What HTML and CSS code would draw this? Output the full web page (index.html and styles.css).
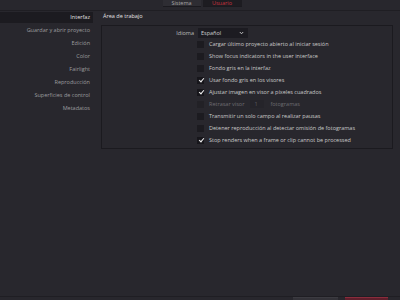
FILE: index.html
```html
<!DOCTYPE html>
<html lang="es">
  <head>
    <meta charset="UTF-8" />
    <title>Preferencias</title>
    <link rel="stylesheet" href="styles.css">
  </head>
  <body>
    <div class="ventana">
      <header class="tabs">
        <div class="tab">Sistema</div>
        <div class="tab activa">Usuario</div>
      </header>
      <div class="cuerpo">
        <ul class="menu">
          <li class="sel">Interfaz</li>
          <li>Guardar y abrir proyecto</li>
          <li>Edición</li>
          <li>Color</li>
          <li>Fairlight</li>
          <li>Reproducción</li>
          <li>Superficies de control</li>
          <li>Metadatos</li>
        </ul>
        <section class="contenido">
          <h2 class="titulo">Área de trabajo</h2>
          <div class="panel">
            <div class="fila fila-idioma">
              <span class="etiqueta">Idioma</span>
              <div class="combo">
                <span>Español</span>
                <svg width="5" height="4" viewBox="0 0 5 4"><path d="M0.8 1 L2.5 2.8 L4.2 1" fill="none" stroke="#cfcfcf" stroke-width="0.9"/></svg>
              </div>
            </div>
            <div class="fila"><span class="caja"></span>Cargar último proyecto abierto al iniciar sesión</div>
            <div class="fila"><span class="caja"></span>Show focus indicators in the user interface</div>
            <div class="fila"><span class="caja"></span>Fondo gris en la interfaz</div>
            <div class="fila"><span class="caja on"></span>Usar fondo gris en los visores</div>
            <div class="fila"><span class="caja on"></span>Ajustar imagen en visor a píxeles cuadrados</div>
            <div class="fila off"><span class="caja"></span>Retrasar visor <span class="num">1</span> fotogramas</div>
            <div class="fila"><span class="caja"></span>Transmitir un solo campo al realizar pausas</div>
            <div class="fila"><span class="caja"></span>Detener reproducción al detectar omisión de fotogramas</div>
            <div class="fila"><span class="caja on"></span>Stop renders when a frame or clip cannot be processed</div>
          </div>
        </section>
      </div>
      <footer class="pie">
        <div class="boton"></div>
        <div class="boton rojo"></div>
      </footer>
    </div>
  </body>
</html>
```

FILE: styles.css
```css
* {
  box-sizing: border-box;
}
body {
  margin: 0;
  background-color: #28272d;
  font-family: "Open Sans", "Liberation Sans", sans-serif;
  font-size: 5.5px;
  color: #c9c9c9;
}
ul {
  list-style: none;
  margin: 0;
  padding: 0;
}
.ventana {
  width: 400px;
  height: 300px;
  display: flex;
  flex-direction: column;
  overflow: hidden;
}
.tabs {
  height: 11px;
  display: flex;
  justify-content: center;
  gap: 2px;
  padding-left: 4px;
  border-bottom: 1px solid #1f1e23;
}
.tab {
  width: 38px;
  height: 7px;
  line-height: 6px;
  text-align: center;
  color: #a8a8a8;
  background-color: #2e2d33;
  border-bottom: 1px solid #1b1a1f;
}
.tab.activa {
  width: 39px;
  background-color: #1d1c21;
  color: #c8323f;
}
.cuerpo {
  flex: 1;
  display: flex;
}
.menu {
  width: 101px;
  padding-top: 1px;
}
.menu li {
  width: 93px;
  height: 13px;
  line-height: 11px;
  text-align: right;
  padding-right: 3px;
  color: #9c9c9f;
}
.menu li.sel {
  height: 11px;
  margin-bottom: 2px;
  background-color: #1c1b20;
  color: #e4e4e4;
}
.contenido {
  width: 292px;
}
.titulo {
  margin: 0;
  height: 14px;
  line-height: 11px;
  padding-left: 2px;
  font-size: 5.5px;
  font-weight: normal;
  color: #e2e2e2;
}
.panel {
  border: 1px solid #1b1a1f;
  padding: 2px 0 2px 94px;
}
.fila {
  height: 12px;
  display: flex;
  align-items: center;
  gap: 4px;
  white-space: nowrap;
}
.fila-idioma {
  height: 10px;
  margin-left: -94px;
  gap: 4px;
}
.etiqueta {
  width: 92px;
  text-align: right;
  color: #bdbdbd;
}
.combo {
  width: 50px;
  height: 10px;
  display: flex;
  align-items: center;
  justify-content: space-between;
  padding: 0 4px 0 3px;
  background-color: #1c1b21;
  color: #d0d0d0;
}
.caja {
  width: 7px;
  height: 7px;
  margin-left: 1px;
  margin-right: 1px;
  background-color: #1c1b20;
  flex: none;
}
.caja.on {
  background-color: #17161b;
  position: relative;
}
.caja.on::after {
  content: "";
  position: absolute;
  left: 2.5px;
  top: 0.5px;
  width: 2px;
  height: 4px;
  border-right: 1px solid #f2f2f2;
  border-bottom: 1px solid #f2f2f2;
  transform: rotate(40deg);
}
.fila.off {
  color: #6e6d72;
}
.fila.off .caja {
  background-color: #222126;
}
.num {
  width: 14px;
  height: 8px;
  line-height: 8px;
  margin: 0 2px;
  padding-left: 4px;
  background-color: #25242a;
  color: #5f5e63;
}
.pie {
  height: 4px;
  display: flex;
  justify-content: flex-end;
  gap: 7px;
  padding-right: 12px;
  border-top: 1px solid #1f1e23;
}
.boton {
  width: 45px;
  height: 8px;
  background-color: #333238;
  border-top: 1px solid #3c3b41;
}
.boton.rojo {
  width: 43px;
  background-color: #5e1f2c;
  border-top: 1px solid #8a2c3c;
}
```
